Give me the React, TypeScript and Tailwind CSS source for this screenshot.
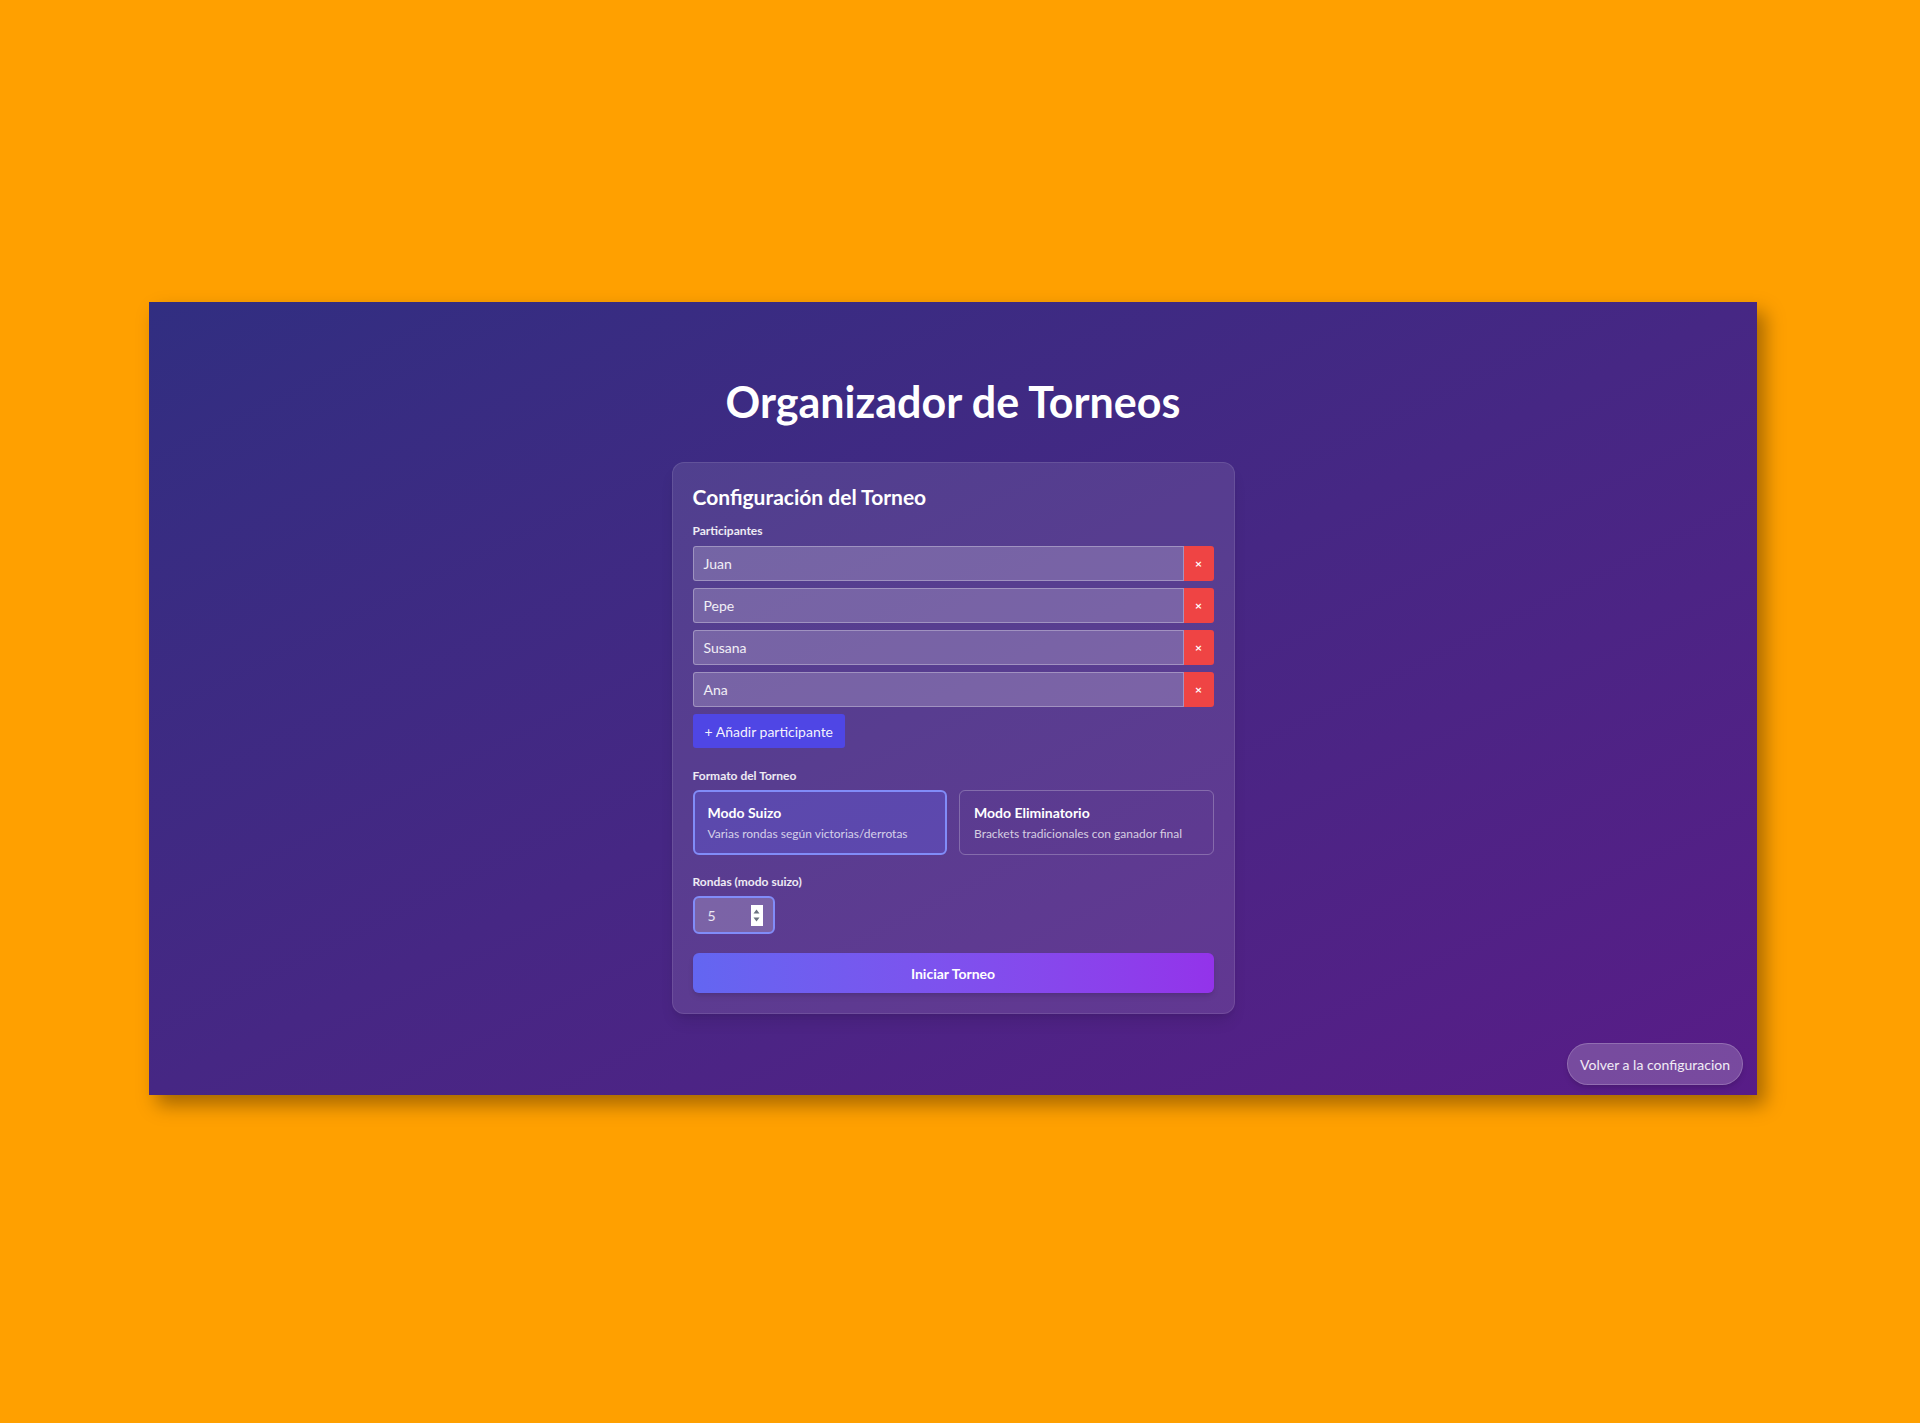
import React from "react";

const participants = ["Juan", "Pepe", "Susana", "Ana"];

const font = { fontFamily: 'Lato, "Noto Sans", sans-serif' };

function ParticipantRow({ name }: { name: string }) {
  return (
    <div className="flex h-[35px]">
      <div className="flex-1 flex items-center px-[10px] bg-white/20 border border-white/30 rounded-l-[3px] text-[14px] text-white/90">
        {name}
      </div>
      <button className="w-[30px] bg-[#ef4444] rounded-r-[3px] flex items-center justify-center text-white text-[12px] font-bold">
        ×
      </button>
    </div>
  );
}

function ModeCard({
  title,
  desc,
  active,
}: {
  title: string;
  desc: string;
  active?: boolean;
}) {
  return (
    <div
      className={`rounded-md ${
        active
          ? "border-2 border-[#818cf8] bg-[#6366f1]/30 px-[13px] py-[11px]"
          : "border border-white/25 px-[14px] py-[12px]"
      }`}
    >
      <p className="text-[14px] font-bold text-white leading-5">{title}</p>
      <p className="text-[12px] text-white/75 leading-4 mt-[3px]">{desc}</p>
    </div>
  );
}

export default function App() {
  return (
    <div className="min-h-screen bg-[#ffa000] pt-[302px] pl-[149px]" style={font}>
      <div className="relative w-[1608px] h-[793px] bg-linear-to-br from-[#312e81] to-[#581c87] shadow-[8px_10px_18px_rgba(0,0,0,0.35)] flex flex-col items-center">
        <h1 className="mt-[74px] text-[43px] leading-[52px] font-bold text-white">
          Organizador de Torneos
        </h1>

        <div className="mt-[34px] w-[563px] bg-white/10 border border-white/10 rounded-xl shadow-lg p-5">
          <h2 className="text-[21px] leading-7 font-bold text-white">
            Configuración del Torneo
          </h2>

          <p className="mt-[12px] text-[12px] leading-4 font-bold text-white/90">
            Participantes
          </p>
          <div className="mt-[7px] flex flex-col gap-[7px]">
            {participants.map((p) => (
              <ParticipantRow key={p} name={p} />
            ))}
            <div>
              <button className="h-[34px] px-[12px] bg-[#4f46e5] rounded-[3px] text-[14px] text-white/95">
                + Añadir participante
              </button>
            </div>
          </div>

          <p className="mt-[20px] text-[12px] leading-4 font-bold text-white/90">
            Formato del Torneo
          </p>
          <div className="mt-[6px] grid grid-cols-2 gap-3">
            <ModeCard
              active
              title="Modo Suizo"
              desc="Varias rondas según victorias/derrotas"
            />
            <ModeCard
              title="Modo Eliminatorio"
              desc="Brackets tradicionales con ganador final"
            />
          </div>

          <p className="mt-[19px] text-[12px] leading-4 font-bold text-white/90">
            Rondas (modo suizo)
          </p>
          <div className="mt-[6px] w-[82px] h-[38px] rounded-md border-2 border-[#818cf8] bg-white/20 flex items-center pl-[13px] pr-[10px]">
            <span className="flex-1 text-[14px] text-white/85">5</span>
            <div className="w-[12px] h-[21px] bg-white flex flex-col items-center justify-center gap-[3px]">
              <svg width="7" height="5" viewBox="0 0 7 5">
                <path d="M3.5 0.5 L6.5 4.5 L0.5 4.5 Z" fill="#6b7280" />
              </svg>
              <svg width="7" height="5" viewBox="0 0 7 5">
                <path d="M0.5 0.5 L6.5 0.5 L3.5 4.5 Z" fill="#6b7280" />
              </svg>
            </div>
          </div>

          <button className="mt-[19px] w-full h-[40px] rounded-md bg-linear-to-r from-[#6366f1] to-[#9333ea] text-white text-[14px] font-bold shadow-md">
            Iniciar Torneo
          </button>
        </div>

        <button className="absolute right-[14px] bottom-[10px] h-[42px] px-[12px] rounded-full bg-white/20 border border-white/20 text-white/90 text-[14px] shadow-md">
          Volver a la configuracion
        </button>
      </div>
    </div>
  );
}
